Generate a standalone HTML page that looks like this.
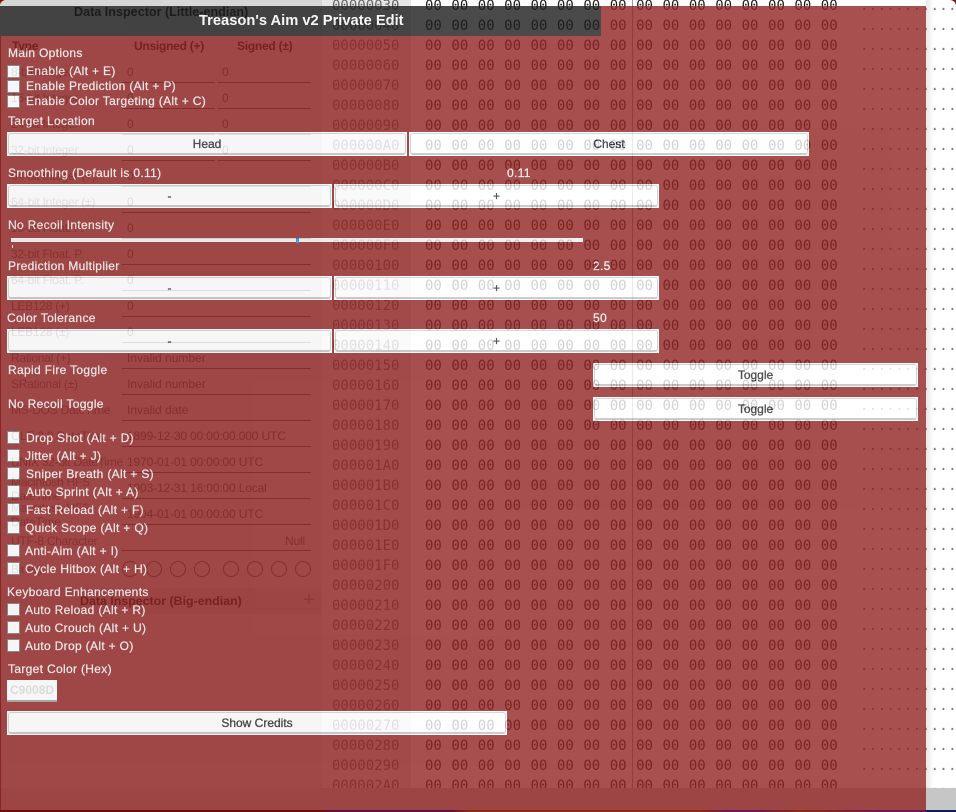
<!DOCTYPE html>
<html><head><meta charset="utf-8"><style>
html,body{margin:0;padding:0;width:956px;height:812px;overflow:hidden;background:#7a1010}
*{box-sizing:border-box}
#w{position:absolute;left:0;top:0;width:956px;height:810px;background:#fff;overflow:hidden;border-radius:6px 6px 0 0}
#strip{position:absolute;left:0;top:810px;width:956px;height:2px;background:linear-gradient(90deg,#6e0c0c 0,#6e0c0c 320px,#5e1040 330px,#5e1040 450px,#8a2a10 470px,#8a2a10 700px,#6b1a50 726px,#6b1a50 760px,#8a2a10 800px,#6b1a50 880px,#6b1a50 925px,#102050 927px)}
#lp{position:absolute;left:0;top:0;width:322px;height:788px;background:#d6d6d6}
#band{position:absolute;left:0;top:588px;width:321px;height:26px;background:#c6c6c6}
#op{position:absolute;left:322px;top:0;width:89px;height:788px;background:#e6e6e6}
#sh{position:absolute;left:926px;top:0;width:8px;height:788px;background:linear-gradient(90deg,#e8e8e8,#fff)}
#st{position:absolute;left:0;top:788px;width:956px;height:22px;background:#c6c6c6}
#edge{position:absolute;left:0;top:36px;width:1px;height:774px;background:#8a2525}
pre{margin:0;position:absolute;font:14px/20px "DejaVu Sans Mono",monospace;white-space:pre}
#a{left:332px;top:-4px;color:#666;height:792px;overflow:hidden}
#h{left:425px;top:-4px;color:#222;word-spacing:1.1px;height:792px;overflow:hidden}
#d{left:860px;top:-4px;color:#777;letter-spacing:.38px;height:792px;overflow:hidden}
#vl{position:absolute;left:632px;top:0;width:1px;height:788px;background:#999}
.t{position:absolute;font:12px/14px "Liberation Sans",sans-serif;color:#666;white-space:nowrap;letter-spacing:-.25px}
.v{color:#555;letter-spacing:-.15px}
.b{font-weight:bold;color:#111}
.l{position:absolute;height:1px;background:#555}
.c{position:absolute;width:16px;height:16px;border:1px solid #555;border-radius:50%;top:561px}
#ov{position:absolute;left:0;top:6px;width:926px;height:804px;background:rgb(146,36,36);opacity:.8}
#tb{position:absolute;left:0;top:0;width:601px;height:30px;background:#1e1e1e;color:#fff;font:bold 14.7px/30px "Liberation Sans",sans-serif;padding-left:199px}
.o{position:absolute;font:12px/14px "Liberation Sans",sans-serif;color:#f4f0f0;white-space:nowrap;letter-spacing:.33px;-webkit-text-stroke:.2px #f4f0f0}
.ck{position:absolute;left:7px;width:13px;height:13px;background:#fff;border:1px solid #777}
.btn{position:absolute;height:24px;background:#fff;padding:1px;}
.btn div{height:22px;border:1px solid #ccc;border-bottom:2px solid #c0c0c0;border-radius:3px;text-align:center;font:12px/21px "Liberation Sans",sans-serif;color:#222;-webkit-text-stroke:.3px #222}
#tr{position:absolute;left:11px;top:232px;width:572px;height:4px;background:#eee}
#th{position:absolute;left:296px;top:232px;width:3px;height:5px;background:#1e8ee8}
#tk{position:absolute;left:12px;top:239px;width:1px;height:3px;background:#eee}
#in{position:absolute;left:7px;top:674px;width:50px;height:22px;background:#fff;border-bottom:2px solid #999;color:#ddd;font:bold 12px/20px "Liberation Sans",sans-serif;padding-left:3px}
</style></head><body>
<div id="strip"></div>
<div id="w">
<div id="lp"></div><div id="band"></div><div id="op"></div><div id="sh"></div>
<pre id="a">00000030
00000040
00000050
00000060
00000070
00000080
00000090
000000A0
000000B0
000000C0
000000D0
000000E0
000000F0
00000100
00000110
00000120
00000130
00000140
00000150
00000160
00000170
00000180
00000190
000001A0
000001B0
000001C0
000001D0
000001E0
000001F0
00000200
00000210
00000220
00000230
00000240
00000250
00000260
00000270
00000280
00000290
000002A0</pre>
<pre id="h">00 00 00 00 00 00 00 00 00 00 00 00 00 00 00 00
00 00 00 00 00 00 00 00 00 00 00 00 00 00 00 00
00 00 00 00 00 00 00 00 00 00 00 00 00 00 00 00
00 00 00 00 00 00 00 00 00 00 00 00 00 00 00 00
00 00 00 00 00 00 00 00 00 00 00 00 00 00 00 00
00 00 00 00 00 00 00 00 00 00 00 00 00 00 00 00
00 00 00 00 00 00 00 00 00 00 00 00 00 00 00 00
00 00 00 00 00 00 00 00 00 00 00 00 00 00 00 00
00 00 00 00 00 00 00 00 00 00 00 00 00 00 00 00
00 00 00 00 00 00 00 00 00 00 00 00 00 00 00 00
00 00 00 00 00 00 00 00 00 00 00 00 00 00 00 00
00 00 00 00 00 00 00 00 00 00 00 00 00 00 00 00
00 00 00 00 00 00 00 00 00 00 00 00 00 00 00 00
00 00 00 00 00 00 00 00 00 00 00 00 00 00 00 00
00 00 00 00 00 00 00 00 00 00 00 00 00 00 00 00
00 00 00 00 00 00 00 00 00 00 00 00 00 00 00 00
00 00 00 00 00 00 00 00 00 00 00 00 00 00 00 00
00 00 00 00 00 00 00 00 00 00 00 00 00 00 00 00
00 00 00 00 00 00 00 00 00 00 00 00 00 00 00 00
00 00 00 00 00 00 00 00 00 00 00 00 00 00 00 00
00 00 00 00 00 00 00 00 00 00 00 00 00 00 00 00
00 00 00 00 00 00 00 00 00 00 00 00 00 00 00 00
00 00 00 00 00 00 00 00 00 00 00 00 00 00 00 00
00 00 00 00 00 00 00 00 00 00 00 00 00 00 00 00
00 00 00 00 00 00 00 00 00 00 00 00 00 00 00 00
00 00 00 00 00 00 00 00 00 00 00 00 00 00 00 00
00 00 00 00 00 00 00 00 00 00 00 00 00 00 00 00
00 00 00 00 00 00 00 00 00 00 00 00 00 00 00 00
00 00 00 00 00 00 00 00 00 00 00 00 00 00 00 00
00 00 00 00 00 00 00 00 00 00 00 00 00 00 00 00
00 00 00 00 00 00 00 00 00 00 00 00 00 00 00 00
00 00 00 00 00 00 00 00 00 00 00 00 00 00 00 00
00 00 00 00 00 00 00 00 00 00 00 00 00 00 00 00
00 00 00 00 00 00 00 00 00 00 00 00 00 00 00 00
00 00 00 00 00 00 00 00 00 00 00 00 00 00 00 00
00 00 00 00 00 00 00 00 00 00 00 00 00 00 00 00
00 00 00 00 00 00 00 00 00 00 00 00 00 00 00 00
00 00 00 00 00 00 00 00 00 00 00 00 00 00 00 00
00 00 00 00 00 00 00 00 00 00 00 00 00 00 00 00
00 00 00 00 00 00 00 00 00 00 00 00 00 00 00 00</pre>
<pre id="d">................
................
................
................
................
................
................
................
................
................
................
................
................
................
................
................
................
................
................
................
................
................
................
................
................
................
................
................
................
................
................
................
................
................
................
................
................
................
................
................</pre>
<div id="vl"></div>
<div id="st"></div>

<div class="t b" style="left:74px;top:5px;font-size:12.6px;letter-spacing:0">Data Inspector (Little-endian)</div>
<div class="t b" style="left:12px;top:39px">Type</div>
<div class="t b" style="left:134px;top:39px">Unsigned (+)</div>
<div class="t b" style="left:237px;top:39px">Signed (±)</div>
<div class="t" style="left:11px;top:65px">8-bit Integer</div><div class="t v" style="left:127px;top:65px">0</div><div class="t v" style="left:222px;top:65px">0</div>
<div class="t" style="left:11px;top:91px">16-bit Integer</div><div class="t v" style="left:127px;top:91px">0</div><div class="t v" style="left:222px;top:91px">0</div>
<div class="t" style="left:11px;top:117px">24-bit Integer</div><div class="t v" style="left:127px;top:117px">0</div><div class="t v" style="left:222px;top:117px">0</div>
<div class="t" style="left:11px;top:143px">32-bit Integer</div><div class="t v" style="left:127px;top:143px">0</div><div class="t v" style="left:222px;top:143px">0</div>
<div class="t" style="left:11px;top:169px">64-bit Integer (+)</div><div class="t v" style="left:127px;top:169px">0</div>
<div class="t" style="left:11px;top:195px">64-bit Integer (±)</div><div class="t v" style="left:127px;top:195px">0</div>
<div class="t" style="left:11px;top:221px">16-bit Float. P.</div><div class="t v" style="left:127px;top:221px">0</div>
<div class="t" style="left:11px;top:247px">32-bit Float. P.</div><div class="t v" style="left:127px;top:247px">0</div>
<div class="t" style="left:11px;top:273px">64-bit Float. P.</div><div class="t v" style="left:127px;top:273px">0</div>
<div class="t" style="left:11px;top:299px">LEB128 (+)</div><div class="t v" style="left:127px;top:299px">0</div>
<div class="t" style="left:11px;top:325px">LEB128 (±)</div><div class="t v" style="left:127px;top:325px">0</div>
<div class="t" style="left:11px;top:351px">Rational (+)</div><div class="t v" style="left:127px;top:351px;letter-spacing:0">Invalid number</div>
<div class="t" style="left:11px;top:377px">SRational (±)</div><div class="t v" style="left:127px;top:377px;letter-spacing:0">Invalid number</div>
<div class="t" style="left:11px;top:403px">MS-DOS DateTime</div><div class="t v" style="left:127px;top:403px;letter-spacing:0">Invalid date</div>
<div class="t" style="left:11px;top:429px">OLE 2.0 DateTime</div><div class="t v" style="left:127px;top:429px">1899-12-30 00:00:00.000 UTC</div>
<div class="t" style="left:11px;top:455px">UNIX 32-bit DateTime</div><div class="t v" style="left:127px;top:455px">1970-01-01 00:00:00 UTC</div>
<div class="t" style="left:11px;top:475px">Macintosh HFS<br>DateTime</div><div class="t v" style="left:127px;top:481px">1903-12-31 16:00:00 Local</div>
<div class="t" style="left:11px;top:501px">Macintosh HFS+<br>DateTime</div><div class="t v" style="left:127px;top:507px">1904-01-01 00:00:00 UTC</div>
<div class="t" style="left:11px;top:534px">UTF-8 Character</div><div class="t v" style="left:285px;top:534px">Null</div>
<div class="t" style="left:11px;top:562px">Binary</div>
<div class="t b" style="left:80px;top:594px;font-size:12.4px;letter-spacing:0">Data Inspector (Big-endian)</div>
<div class="t" style="left:303px;top:590px;font-size:20px;line-height:20px;color:#888">+</div>

<div class="l" style="left:122px;top:82px;width:93px"></div><div class="l" style="left:218px;top:82px;width:93px"></div>
<div class="l" style="left:122px;top:108px;width:93px"></div><div class="l" style="left:218px;top:108px;width:93px"></div>
<div class="l" style="left:122px;top:134px;width:93px"></div><div class="l" style="left:218px;top:134px;width:93px"></div>
<div class="l" style="left:122px;top:160px;width:93px"></div><div class="l" style="left:218px;top:160px;width:93px"></div>
<div class="l" style="left:122px;top:186px;width:189px"></div>
<div class="l" style="left:122px;top:212px;width:189px"></div>
<div class="l" style="left:122px;top:238px;width:189px"></div>
<div class="l" style="left:122px;top:264px;width:189px"></div>
<div class="l" style="left:122px;top:290px;width:189px"></div>
<div class="l" style="left:122px;top:316px;width:189px"></div>
<div class="l" style="left:122px;top:342px;width:189px"></div>
<div class="l" style="left:122px;top:368px;width:189px"></div>
<div class="l" style="left:122px;top:394px;width:189px"></div>
<div class="l" style="left:122px;top:420px;width:189px"></div>
<div class="l" style="left:122px;top:446px;width:189px"></div>
<div class="l" style="left:122px;top:472px;width:189px"></div>
<div class="l" style="left:122px;top:498px;width:189px"></div>
<div class="l" style="left:122px;top:524px;width:189px"></div>
<div class="l" style="left:122px;top:550px;width:189px"></div>
<div class="c" style="left:122px"></div><div class="c" style="left:146px"></div><div class="c" style="left:170px"></div><div class="c" style="left:194px"></div>
<div class="c" style="left:223px"></div><div class="c" style="left:247px"></div><div class="c" style="left:271px"></div><div class="c" style="left:295px"></div>

<div id="ov">
<div id="tb">Treason's Aim v2 Private Edit</div>
<div class="o" style="left:8px;top:40px">Main Options</div>
<div class="ck" style="top:59px"></div><div class="o" style="left:26px;top:58px">Enable (Alt + E)</div>
<div class="ck" style="top:74px"></div><div class="o" style="left:26px;top:73px">Enable Prediction (Alt + P)</div>
<div class="ck" style="top:89px"></div><div class="o" style="left:26px;top:88px">Enable Color Targeting (Alt + C)</div>
<div class="o" style="left:8px;top:108px">Target Location</div>
<div class="btn" style="left:7px;top:126px;width:400px"><div>Head</div></div>
<div class="btn" style="left:409px;top:126px;width:400px"><div>Chest</div></div>
<div class="o" style="left:8px;top:160px">Smoothing (Default is 0.11)</div>
<div class="o" style="left:507px;top:160px">0.11</div>
<div class="btn" style="left:7px;top:178px;width:325px"><div>-</div></div>
<div class="btn" style="left:334px;top:178px;width:325px"><div>+</div></div>
<div class="o" style="left:8px;top:212px">No Recoil Intensity</div>
<div id="tr"></div><div id="th"></div><div id="tk"></div>
<div class="o" style="left:8px;top:253px">Prediction Multiplier</div>
<div class="o" style="left:593px;top:253px">2.5</div>
<div class="btn" style="left:7px;top:270px;width:325px"><div>-</div></div>
<div class="btn" style="left:334px;top:270px;width:325px"><div>+</div></div>
<div class="o" style="left:7px;top:305px">Color Tolerance</div>
<div class="o" style="left:593px;top:305px">50</div>
<div class="btn" style="left:7px;top:323px;width:325px"><div>-</div></div>
<div class="btn" style="left:334px;top:323px;width:325px"><div>+</div></div>
<div class="o" style="left:8px;top:357px">Rapid Fire Toggle</div>
<div class="btn" style="left:593px;top:357px;width:325px"><div>Toggle</div></div>
<div class="o" style="left:8px;top:391px">No Recoil Toggle</div>
<div class="btn" style="left:593px;top:391px;width:325px"><div>Toggle</div></div>
<div class="ck" style="top:425px"></div><div class="o" style="left:26px;top:425px">Drop Shot (Alt + D)</div>
<div class="ck" style="top:443px"></div><div class="o" style="left:25px;top:443px">Jitter (Alt + J)</div>
<div class="ck" style="top:461px"></div><div class="o" style="left:26px;top:461px">Sniper Breath (Alt + S)</div>
<div class="ck" style="top:479px"></div><div class="o" style="left:26px;top:479px">Auto Sprint (Alt + A)</div>
<div class="ck" style="top:497px"></div><div class="o" style="left:26px;top:497px">Fast Reload (Alt + F)</div>
<div class="ck" style="top:515px"></div><div class="o" style="left:25px;top:515px">Quick Scope (Alt + Q)</div>
<div class="ck" style="top:538px"></div><div class="o" style="left:25px;top:538px">Anti-Aim (Alt + I)</div>
<div class="ck" style="top:556px"></div><div class="o" style="left:25px;top:556px">Cycle Hitbox (Alt + H)</div>
<div class="o" style="left:7px;top:579px">Keyboard Enhancements</div>
<div class="ck" style="top:597px"></div><div class="o" style="left:25px;top:597px">Auto Reload (Alt + R)</div>
<div class="ck" style="top:615px"></div><div class="o" style="left:25px;top:615px">Auto Crouch (Alt + U)</div>
<div class="ck" style="top:633px"></div><div class="o" style="left:25px;top:633px">Auto Drop (Alt + O)</div>
<div class="o" style="left:8px;top:656px">Target Color (Hex)</div>
<div id="in">C9008D</div>
<div class="btn" style="left:7px;top:705px;width:500px"><div>Show Credits</div></div>
</div>
<div id="edge"></div>
</div>
</body></html>
